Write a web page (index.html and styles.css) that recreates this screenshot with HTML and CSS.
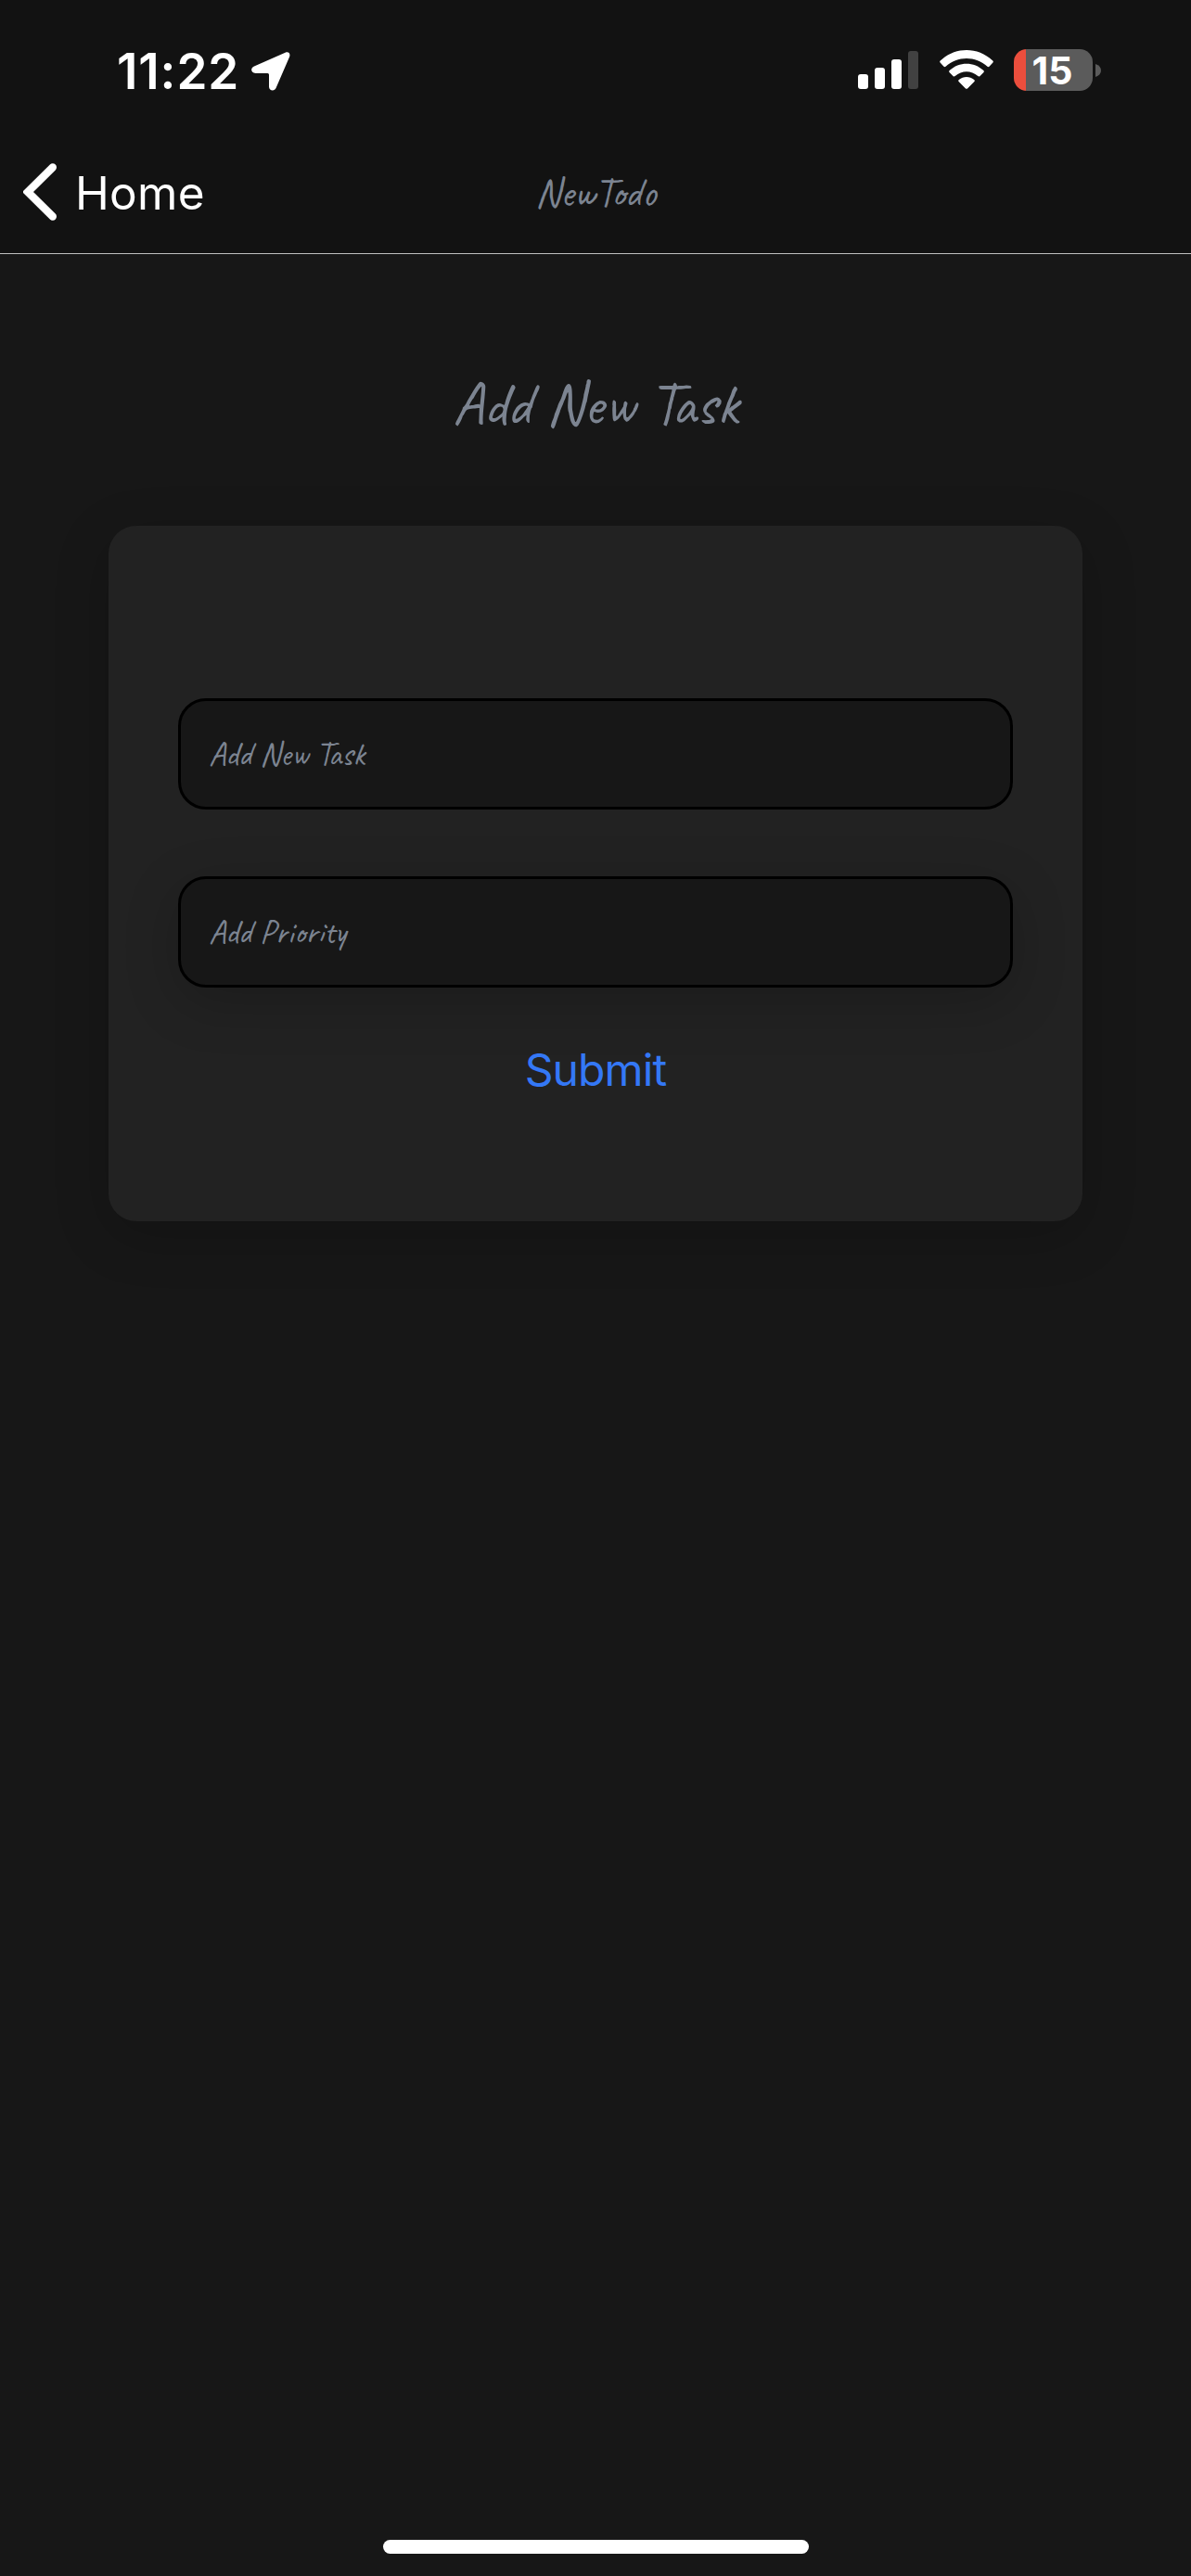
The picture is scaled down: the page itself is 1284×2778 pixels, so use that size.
FILE: index.html
```html
<!DOCTYPE html>
<html lang="en">
<head>
<meta charset="utf-8">
<title>NewTodo</title>
<link rel="stylesheet" href="styles.css">
</head>
<body>
<div class="screen">
  <header class="header">
    <div class="status">
      <div class="status-left">
        <span class="time">11:22</span>
        <svg class="location" width="42" height="42" viewBox="0 0 42 42"><path d="M3 15.5 36.5.8C40-.7 42.5 1.800 41 5.500L26.500 39C25 42.800 19 42 19 37.500V24.500Q19 23 17.500 23H4.500C-.5 23-1.500 17.500 3 15.500Z" fill="#fff"/></svg>
      </div>
      <div class="status-right">
        <svg class="signal" width="65" height="41" viewBox="0 0 65 41" fill="#fff"><rect y="25" width="11" height="16" rx="3"/><rect x="18" y="18" width="11" height="23" rx="3"/><rect x="36" y="9" width="11" height="32" rx="3"/><rect x="54" width="11" height="41" rx="3" fill="#414141"/></svg>
        <svg class="wifi" width="58" height="42" viewBox="0 0 58 42" fill="#fff"><path d="M.6 13.500Q-.3 12.500.7 11.500C17-3.700 41-3.700 57.300 11.500Q58.300 12.500 57.400 13.500L53.500 17.700Q52.600 18.600 51.500 17.700C39 6 19 6 6.500 17.700Q5.400 18.600 4.500 17.700Z"/><path d="M10.500 24Q9.600 23 10.600 22.100C21 12.300 37 12.300 47.400 22.100Q48.400 23 47.500 24L43.300 28.200Q42.400 29 41.300 28.100C34 21.700 24 21.700 16.700 28.100Q15.600 29 14.700 28.200Z"/><path d="M20.600 34Q19.700 33 20.800 32.100C25.500 27.900 32.500 27.900 37.200 32.100Q38.300 33 37.400 34L30 41.400Q29 42.300 28 41.400Z"/></svg>
        <div class="battery">15</div>
        <svg class="nub" width="6" height="14" viewBox="0 0 6 14"><path d="M0 0Q6 2 6 7T0 14Z" fill="#5b5b5b"/></svg>
      </div>
    </div>
    <nav class="nav">
      <a class="back"><svg width="36" height="62" viewBox="0 0 36 62"><path d="M31.800 4.500 5 31 31.800 57.500" fill="none" stroke="#fff" stroke-width="8.400" stroke-linecap="round"/></svg><span>Home</span></a>
      <div class="nav-title script">NewTodo</div>
      <div></div>
    </nav>
  </header>
  <main class="main">
    <h1 class="heading script">Add New Task</h1>
    <form class="card">
      <div class="field"><span class="script">Add New Task</span></div>
      <div class="field raised"><span class="script">Add Priority</span></div>
      <div class="submit">Submit</div>
    </form>
  </main>
  <div class="home-indicator"></div>
</div>
</body>
</html>
```
FILE: styles.css
```css
* { box-sizing: border-box; }
body { margin: 0; background: #171717; font-family: Inter, "Liberation Sans", sans-serif; }
.screen { width: 1284px; height: 2778px; display: flex; flex-direction: column; overflow: hidden; }
.header { height: 274px; background: #121212; border-bottom: 1px solid #bfc0c0; }
.status { height: 150px; padding: 53px 97px 0 126px; display: flex; justify-content: space-between; color: #fff; }
.status-left, .status-right { display: flex; align-items: flex-start; }
.time { width: 130px; margin-right: 15px; font-size: 53px; line-height: 48px; font-weight: 600; letter-spacing: 0.9px; white-space: nowrap; }
.location { margin-top: 3px; }
.signal { margin: 2px 23px 0 0; }
.wifi { margin: 1px 22px 0 0; }
.battery { width: 85px; height: 45px; margin-right: 3px; padding-right: 2px; border-radius: 14px; background: linear-gradient(90deg, #eb4e3d 13px, #5b5b5b 13px); font-size: 41px; line-height: 46px; font-weight: 700; text-align: center; }
.nub { margin-top: 16px; }
.nav { height: 114px; padding: 0 25px; display: grid; grid-template-columns: 1fr auto 1fr; align-items: center; }
.back { display: flex; align-items: center; gap: 20px; color: #fff; font-size: 49.500px; line-height: 62px; letter-spacing: 0.3px; }
.back span { padding-top: 2px; }
.script { font-family: Caveat, Lato, "Liberation Sans", cursive; font-weight: 400; color: #7c8491; white-space: nowrap; }
.nav-title { font-size: 44.500px; line-height: 60px; }
.main { flex: 1; display: flex; flex-direction: column; align-items: center; padding-top: 122px; }
.heading { margin: 0; height: 80px; font-size: 66px; line-height: 80px; }
.card { width: 1050px; height: 750px; margin-top: 91px; padding: 186px 75px 0; border-radius: 30px; background: #222; box-shadow: 0 15px 60px rgba(0, 0, 0, .2); }
.field { height: 120px; margin-bottom: 72px; padding: 0 30px; border: 3px solid #000; border-radius: 30px; background: #171717; display: flex; align-items: center; font-size: 36px; }
.raised { margin-bottom: 59px; box-shadow: 0 15px 60px rgba(0, 0, 0, .2); }
.submit { color: #3478f6; font-size: 48px; line-height: 60px; letter-spacing: -0.9px; text-align: center; }
.home-indicator { width: 459px; height: 15px; margin: 0 0 24px 413px; border-radius: 8px; background: #fff; }
```
